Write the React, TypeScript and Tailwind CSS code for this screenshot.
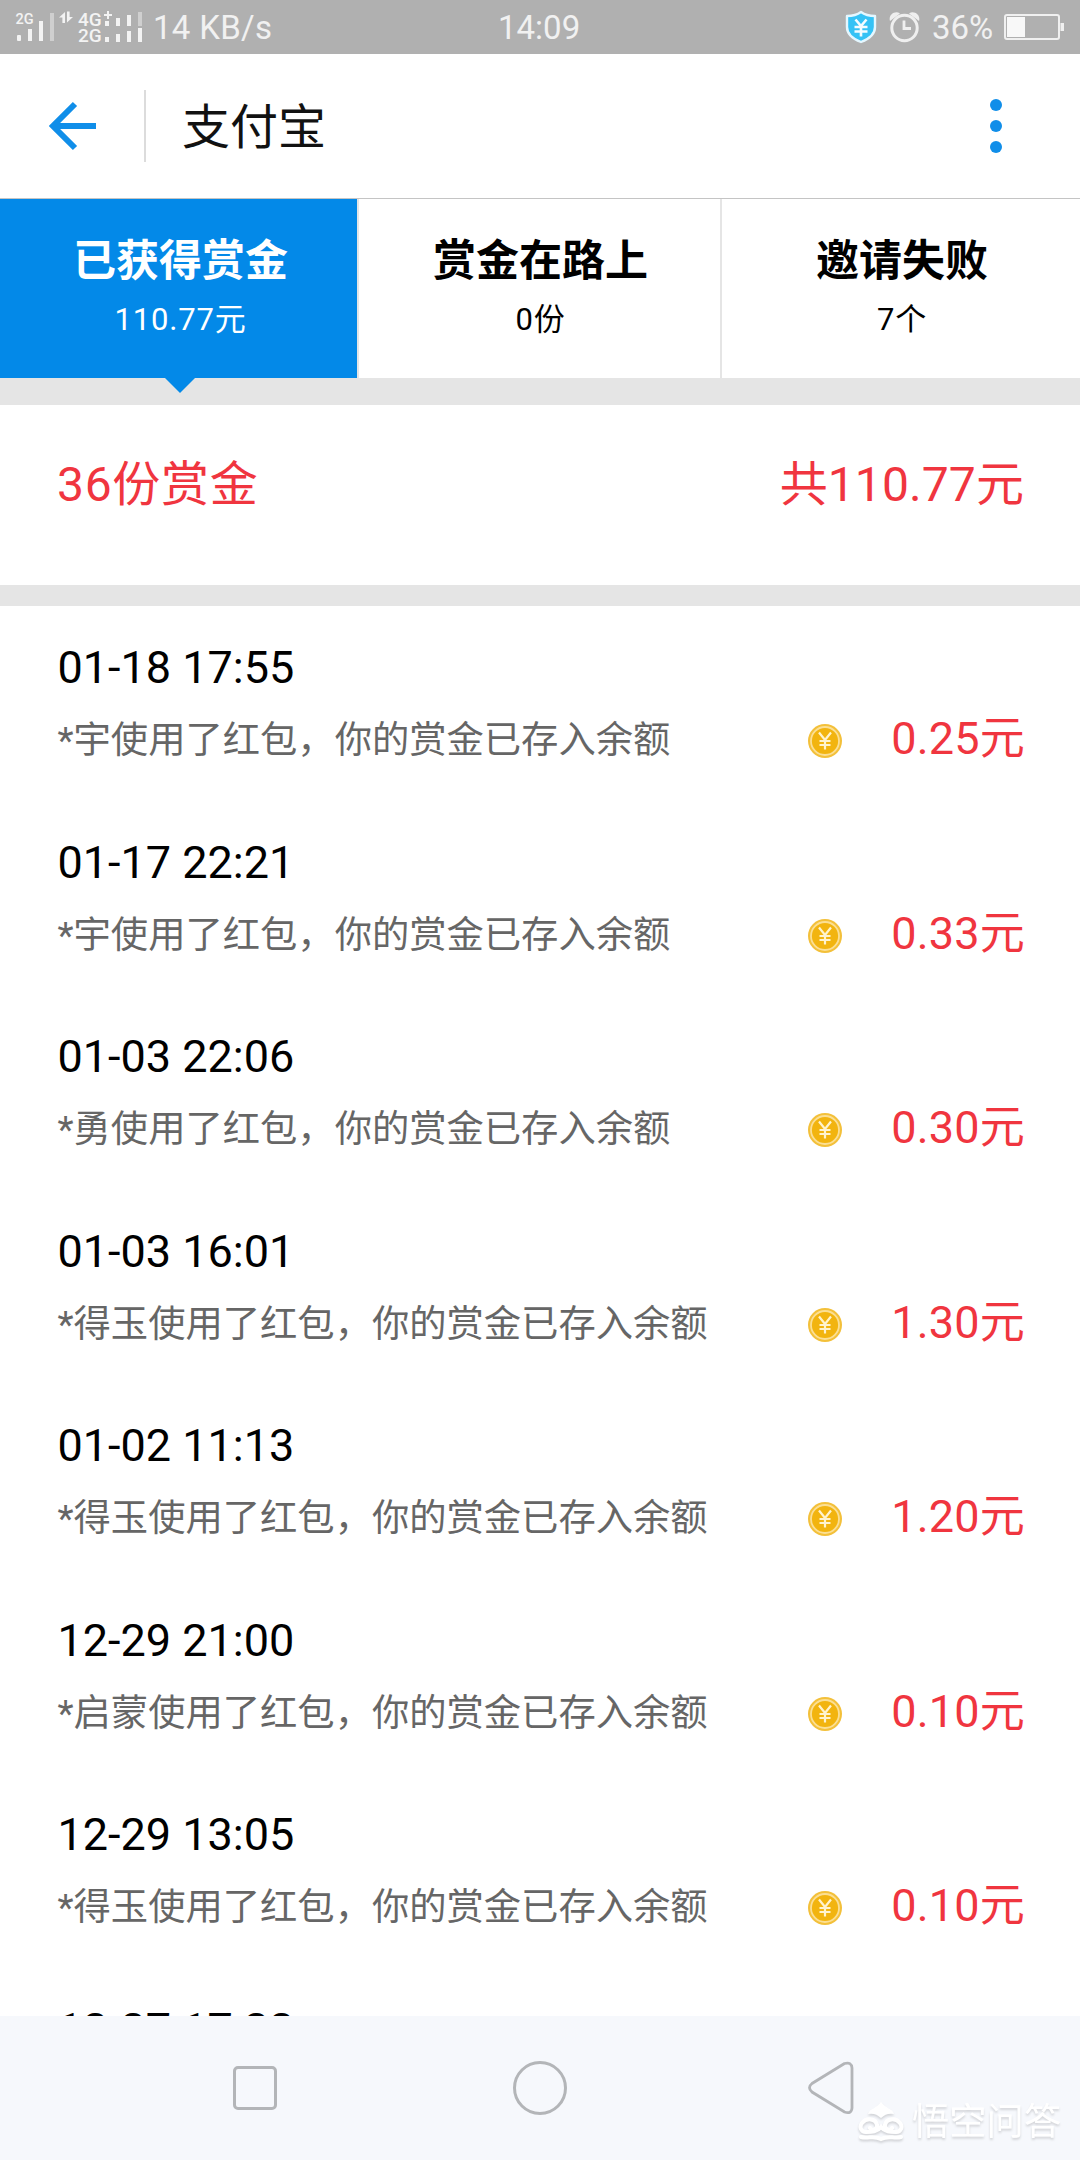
const records = [
  { time: "01-18 17:55", name: "*宇", amount: "0.25元" },
  { time: "01-17 22:21", name: "*宇", amount: "0.33元" },
  { time: "01-03 22:06", name: "*勇", amount: "0.30元" },
  { time: "01-03 16:01", name: "*得玉", amount: "1.30元" },
  { time: "01-02 11:13", name: "*得玉", amount: "1.20元" },
  { time: "12-29 21:00", name: "*启蒙", amount: "0.10元" },
  { time: "12-29 13:05", name: "*得玉", amount: "0.10元" },
];

const tabs = [
  { title: "已获得赏金", value: "110.77元" },
  { title: "赏金在路上", value: "0份" },
  { title: "邀请失败", value: "7个" },
];

function Signals() {
  return (
    <svg width="130" height="54" viewBox="15 0 130 54" fill="#f3f3f3" fontFamily="Roboto">
      <text x="15.5" y="23.5" fontSize="14.5" fontWeight="500">2G</text>
      <rect x="17" y="35" width="4" height="6" rx="1" />
      <rect x="28" y="29" width="4" height="12" />
      <rect x="39" y="21" width="4" height="20" />
      <rect x="50" y="13" width="4" height="28" fill="#cfcfcf" />
      <path d="M59 17.500 65 12v11h-2.600v-5.500zM73 17 67 22.500v-11h2.600v5.500z" />
      <text x="78" y="25.5" fontSize="19" fontWeight="500">4G</text>
      <path d="M107 11h2v3h3v2h-3v3h-2v-3h-3v-2h3z" />
      <text x="78" y="41.5" fontSize="19" fontWeight="500">2G</text>
      <rect x="105" y="21" width="4" height="5" />
      <rect x="116" y="18" width="4" height="8" />
      <rect x="127" y="15" width="4" height="11" />
      <rect x="138" y="12" width="4" height="14" fill="#cfcfcf" />
      <rect x="105" y="37" width="4" height="5" />
      <rect x="116" y="34" width="4" height="8" />
      <rect x="127" y="31" width="4" height="11" />
      <rect x="138" y="28" width="4" height="14" />
    </svg>
  );
}

function ShieldIcon() {
  return (
    <svg width="32" height="34" viewBox="0 0 32 34" fill="none">
      <path d="M16 2C12 5 7 6 2 6v11c0 7 6 12 14 15 8-3 14-8 14-15V6c-5 0-10-1-14-4z" fill="#35c2f5" stroke="#e4f7ff" strokeWidth="2.4" strokeLinejoin="round" />
      <path d="M10.500 9.500 16 16l5.500-6.500M16 16v10.500M9.500 17h13M9.500 21.500h13" stroke="#f4fcff" strokeWidth="2.6" />
    </svg>
  );
}

function AlarmIcon() {
  return (
    <svg width="32" height="32" viewBox="0 0 32 32" fill="none" stroke="#efefef">
      <circle cx="15.5" cy="17" r="12.7" strokeWidth="3" />
      <path d="M15 9.500v8h7" strokeWidth="2.8" />
      <path d="M1 10C-1 4 6-1 11 2.500zM30 10c2-6-5-11-10-7.500z" fill="#efefef" stroke="none" />
    </svg>
  );
}

function BatteryIcon() {
  return (
    <svg width="60" height="28" viewBox="0 0 60 28" fill="none">
      <rect x="1" y="2" width="54" height="24" rx="2" stroke="#f0f0f0" strokeWidth="2" />
      <rect x="3" y="4" width="18" height="20" fill="#f8f8f8" />
      <path d="M56.500 10h3.500v8h-3.500z" fill="#f0f0f0" />
    </svg>
  );
}

function StatusBar() {
  return (
    <div className="relative flex h-[54px] shrink-0 items-center justify-between bg-[#b0b0b0] pl-[15px] pr-[16px] text-[33px] leading-[56px] text-[#f1f1f1]">
      <div className="flex items-center">
        <Signals />
        <span className="ml-[8px] h-[54px] tracking-[0.3px]">14 KB/s</span>
      </div>
      <div className="absolute left-[498px] top-0 h-[54px]">14:09</div>
      <div className="flex items-center">
        <ShieldIcon />
        <div className="ml-[12px] flex">
          <AlarmIcon />
        </div>
        <span className="ml-[11px] mr-[10px] h-[54px] w-[62px] whitespace-nowrap">36%</span>
        <BatteryIcon />
      </div>
    </div>
  );
}

function Header() {
  return (
    <div className="flex h-[145px] shrink-0 items-center border-b border-[#c4c4c4] bg-white">
      <svg className="ml-[49px]" width="48" height="50" viewBox="0 0 48 50" fill="none" stroke="#108ee9" strokeWidth="6">
        <path d="M26 3 4 25l22 22M4 25h43" />
      </svg>
      <div className="ml-[47px] h-[72px] w-[2px] bg-[#dcdcdc]" />
      <div className="ml-[36px] h-[72px] flex-1 text-[48px] leading-[76px] text-[#111]">支付宝</div>
      <div className="mr-[78px] flex flex-col gap-[9px]">
        <div className="size-[12px] rounded-full bg-[#108ee9]" />
        <div className="size-[12px] rounded-full bg-[#108ee9]" />
        <div className="size-[12px] rounded-full bg-[#108ee9]" />
      </div>
    </div>
  );
}

function TabLabel({ title, value }: { title: string; value: string }) {
  return (
    <>
      <div className="mt-[32px] h-[60px] text-[43px] font-bold leading-[60px]">{title}</div>
      <div className="h-[56px] text-[31px] leading-[58px] tracking-[0.8px]">{value}</div>
    </>
  );
}

function Tabs() {
  return (
    <div className="flex h-[206px] shrink-0 flex-col bg-[#e5e5e5] text-center">
      <div className="grid h-[179px] grid-cols-[357px_361px_358px] gap-x-[2px] text-black">
        <div className="relative bg-[#0389e8] pl-[4px] text-white">
          <TabLabel {...tabs[0]} />
          <svg className="absolute left-[165px] top-[178px]" width="30" height="16" viewBox="0 0 30 16">
            <path d="M0 0h30v1L15 16 0 1z" fill="#0389e8" />
          </svg>
        </div>
        <div className="bg-white pl-[2px]">
          <TabLabel {...tabs[1]} />
        </div>
        <div className="bg-white pl-[2px]">
          <TabLabel {...tabs[2]} />
        </div>
      </div>
    </div>
  );
}

function Coin() {
  return (
    <svg width="36" height="36" viewBox="0 0 36 36" fill="none">
      <circle cx="18" cy="18" r="17" fill="#f3c03a" />
      <circle cx="18" cy="18" r="14" fill="#f2b40f" stroke="#fbdf94" strokeWidth="1.8" />
      <path d="M12 9.500l6 7.500 6-7.500M18 17v9.500M12.500 18h11M12.500 22h11" stroke="#fff3cf" strokeWidth="2.2" />
    </svg>
  );
}

function Record({ time, name, amount }: { time: string; name: string; amount: string }) {
  return (
    <div className="h-[194.5px] shrink-0 pl-[57.5px] pr-[55px] pt-[32px]">
      <div className="h-[60px] text-[45px] leading-[60px] text-black">{time}</div>
      <div className="mt-[13px] flex h-[60px] items-center">
        <div className="h-[60px] flex-1 whitespace-nowrap text-[37.3px] leading-[58px] text-[#666]">
          {name}使用了红包，你的赏金已存入余额
        </div>
        <Coin />
        <div className="ml-[48px] h-[60px] w-[134px] whitespace-nowrap text-right text-[45px] leading-[56px] tracking-[0.2px] text-[#f0353f]">{amount}</div>
      </div>
    </div>
  );
}

function Watermark() {
  return (
    <div className="absolute left-[858px] top-[81px] flex items-center text-white drop-shadow-[0_2px_1px_rgba(0,0,0,0.14)]">
      <svg width="46" height="44" viewBox="0 0 46 44" fill="none" stroke="#fff" strokeWidth="4" strokeLinecap="round">
        <path d="M10 14C12 8 18 9 23 2c5 7 11 6 13 12-5-1-9 0-13 4-4-4-8-5-13-4z" fill="#fff" stroke="none" />
        <path d="M12 28c1 3 8 2 7-3-1-6-10-8-15-2-3 4-1 9 4 9 6 0 11 0 15-5 4 5 9 5 15 5 5 0 7-5 4-9-5-6-14-4-15 2-1 5 6 6 7 3" />
        <path d="M3 37c7 2 13-2 20 2 7-4 13 0 20-2" />
      </svg>
      <span className="ml-[8px] h-[50px] whitespace-nowrap text-[37.3px] leading-[50px]">悟空问答</span>
    </div>
  );
}

function NavBar() {
  return (
    <div className="relative h-[144px] shrink-0 bg-[#f6f8fc]">
      <div className="flex h-[144px] items-center pl-[233px]">
        <div className="h-[44px] w-[44px] rounded-[5px] border-[3px] border-[#b3b5b8]" />
        <div className="ml-[236px] size-[54px] rounded-full border-[3px] border-[#b3b5b8]" />
        <svg className="ml-[241px]" width="46" height="54" viewBox="0 0 46 54" fill="none" stroke="#b3b5b8" strokeWidth="2.8">
          <path d="M36.500 2.500 4 22.500q-5 4 0 8.500l32.500 20q7 2.500 7.500-4v-40q-.5-6.500-7.500-4.500z" />
        </svg>
      </div>
      <Watermark />
    </div>
  );
}

export default function App() {
  return (
    <div className="flex h-[2160px] w-[1080px] flex-col overflow-hidden bg-white font-['Roboto','Noto_Sans_CJK_SC',sans-serif]">
      <StatusBar />
      <Header />
      <Tabs />
      <div className="flex h-[180px] shrink-0 justify-between pl-[57px] pr-[56px] pt-[40px] text-[48px] leading-[80px] text-[#f0353f]">
        <span className="h-[80px] tracking-[0.7px]">36份赏金</span>
        <span className="h-[80px] tracking-[0.1px]">共110.77元</span>
      </div>
      <div className="h-[21px] shrink-0 bg-[#e5e5e5]" />
      <div className="flex min-h-0 flex-1 flex-col overflow-hidden">
        {records.map((r) => (
          <Record key={r.time} {...r} />
        ))}
        <div className="shrink-0 pl-[57.5px] pt-[32px] text-[45px] leading-[60px] text-black">12-27 17:22</div>
      </div>
      <NavBar />
    </div>
  );
}
